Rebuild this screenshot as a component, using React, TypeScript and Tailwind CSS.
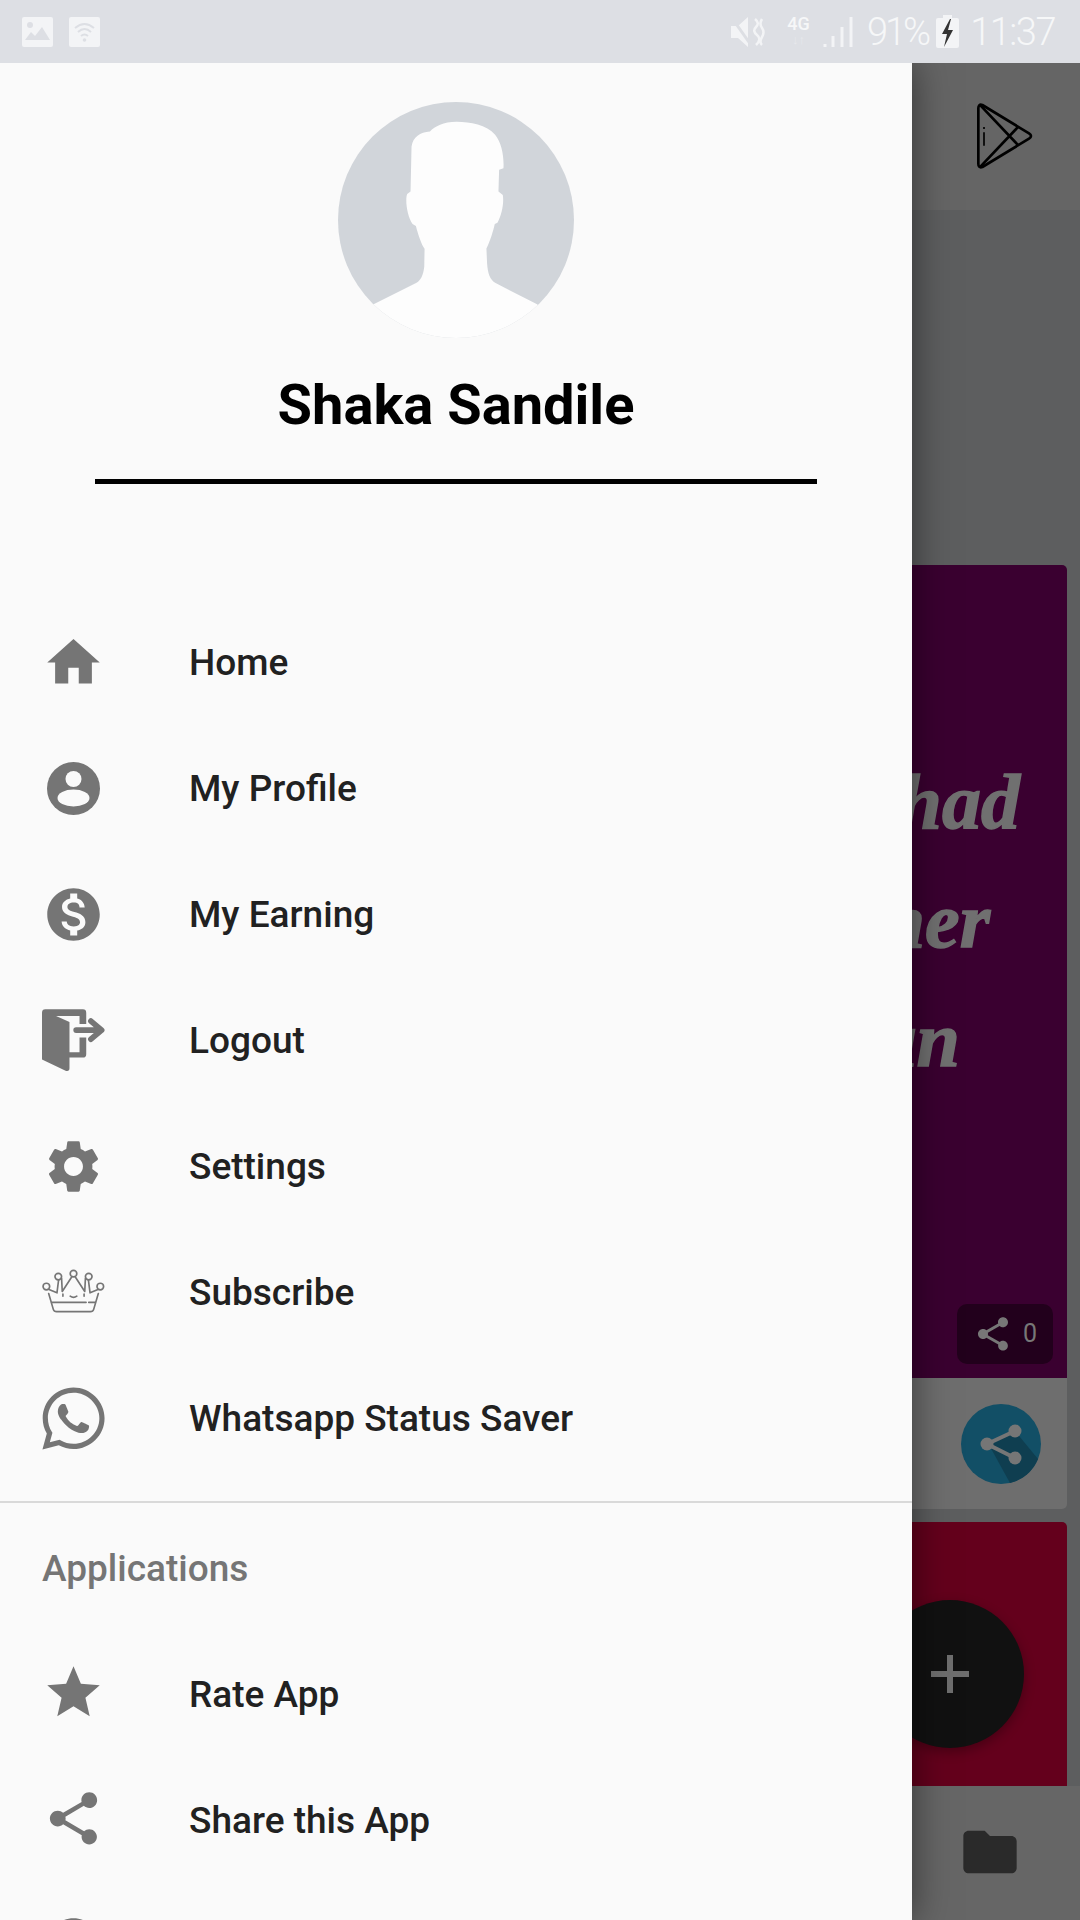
import { MdHome, MdMonetizationOn, MdSettings, MdStar, MdShare, MdFolder, MdHelp } from 'react-icons/md';
import { FaWhatsapp } from 'react-icons/fa';

const ROBOTO = 'font-["Roboto",sans-serif]';

const ProfileIcon = () => (
  <svg viewBox="0 0 53 53" className="w-[53px] h-[53px]">
    <circle cx="26.5" cy="26.5" r="26.5" fill="#757575" />
    <circle cx="26.5" cy="17" r="8" fill="#fafafa" />
    <ellipse cx="26.5" cy="36" rx="16" ry="8.5" fill="#fafafa" />
  </svg>
);

const LogoutIcon = () => (
  <svg viewBox="60 1155 200 200" className="w-[67px] h-[67px] shrink-0" fill="#757575">
    <path d="M66 1172q0-10 10-10h112q10 0 10 10v34h-20v-24h-70l40 18v90h30v-44h20v50q0 10-10 10h-40v32q0 10-10 8l-72-34v-140z" />
    <path d="M168 1224h74M212 1197l32 27-32 27" fill="none" stroke="#757575" strokeWidth="17" strokeLinecap="round" strokeLinejoin="round" />
  </svg>
);

const CrownIcon = () => (
  <svg viewBox="62 84 196 136" className="w-[65px] h-[45px] shrink-0 mb-[2px]" fill="none" stroke="#757575" strokeWidth="5" strokeLinecap="round" strokeLinejoin="round">
    <circle cx="78" cy="137" r="10" />
    <circle cx="114" cy="107" r="10" />
    <circle cx="160" cy="98" r="10" />
    <circle cx="206" cy="107" r="10" />
    <circle cx="241" cy="137" r="10" />
    <path d="M86 146l24 10 5-39M124 112l2 40 28-43M166 109l28 43 2-40M205 117l5 39 24-10" />
    <path d="M85 158l14 48q2 7 10 7h102q8 0 10-7l14-48" />
    <path d="M94 185h104M206 185h20" />
    <path d="M128 160v6M192 160v6M150 166q10 7 20 0" />
  </svg>
);

const PlayIcon = () => (
  <svg viewBox="225 120 180 210" className="w-[60px] h-[70px]" fill="none" stroke="#000" strokeWidth="8" strokeLinejoin="round">
    <path d="M247 132l140 85q12 8 0 16l-140 85q-12 4-12-10V142q0-14 12-10z" />
    <path d="M242 134l112 118M242 316l112-118" />
    <path d="M252 198v6M252 214v40" strokeWidth="5" />
  </svg>
);

const Avatar = () => (
  <svg viewBox="55 37 706 706" className="w-[236px] h-[236px] mx-auto">
    <defs>
      <clipPath id="avatar-clip">
        <circle cx="408" cy="390" r="353" />
      </clipPath>
    </defs>
    <circle cx="408" cy="390" r="353" fill="#d1d5da" />
    <path
      clipPath="url(#avatar-clip)"
      fill="#fdfdfd"
      d="M410 96C370 96 345 110 330 125C300 128 280 140 275 170L272 305L262 312C255 330 262 380 278 402L288 408C295 435 305 465 314 476L313 530C310 555 303 570 290 578L160 643L160 760L652 760L652 643L525 578C510 568 503 550 501 520L499 475C510 455 520 420 524 402L532 398C545 375 552 340 548 315L535 305L537 240L550 235C552 200 545 160 525 135C500 105 450 96 410 96Z"
    />
  </svg>
);

const Row = ({ icon, label, lower }: { icon: React.ReactNode; label?: string; lower?: boolean }) => (
  <div className="flex items-center h-[126px] shrink-0">
    <div className="w-[147px] flex justify-center items-center">{icon}</div>
    <div className="w-[42px]" />
    <span className={`${ROBOTO} text-[37px] font-medium text-[#212121] ${lower ? 'pt-[6px]' : 'pt-[2px]'}`}>{label}</span>
  </div>
);

const Drawer = () => (
  <aside className="relative z-10 w-[912px] shrink-0 bg-[#fafafa] shadow-[0_0_36px_rgba(0,0,0,0.5)] flex flex-col">
    <div className="pt-[39px] shrink-0">
      <Avatar />
      <h1 className={`${ROBOTO} text-[56px] leading-[66px] font-bold text-black text-center mt-[34px]`}>Shaka Sandile</h1>
      <div className="h-[5px] bg-black mx-[95px] mt-[41px]" />
    </div>
    <nav className="flex flex-col mt-[115px] shrink-0">
      <Row icon={<MdHome size={63} color="#757575" className="shrink-0" />} label="Home" />
      <Row icon={<ProfileIcon />} label="My Profile" />
      <Row icon={<MdMonetizationOn size={63} color="#757575" className="shrink-0" />} label="My Earning" />
      <Row icon={<LogoutIcon />} label="Logout" />
      <Row icon={<MdSettings size={63} color="#757575" className="shrink-0" />} label="Settings" />
      <Row icon={<CrownIcon />} label="Subscribe" />
      <Row icon={<FaWhatsapp size={71} color="#757575" className="shrink-0" />} label="Whatsapp Status Saver" />
    </nav>
    <div className="h-[2px] bg-[#d9d9d9] mt-[20px] shrink-0" />
    <div className={`${ROBOTO} h-[126px] pt-[6px] shrink-0 flex items-center pl-[42px] text-[37px] font-medium text-[#757575]`}>Applications</div>
    <Row lower icon={<MdStar size={63} color="#757575" className="shrink-0" />} label="Rate App" />
    <Row lower icon={<MdShare size={63} color="#757575" className="shrink-0" />} label="Share this App" />
    <Row icon={<MdHelp size={63} color="#757575" className="shrink-0" />} />
  </aside>
);

const Feed = () => (
  <main className="relative flex-1 min-w-0 overflow-hidden flex flex-col bg-[#5d5e5f]">
    <div className="h-[147px] shrink-0 bg-[#656565] flex items-center justify-end pr-[45px] pb-[2px]">
      <PlayIcon />
    </div>
    <div className="flex-1 pr-[13px] pt-[355px] flex flex-col">
      <div className="h-[813px] bg-[#3a0030] rounded-tr-[5px] flex flex-col justify-between overflow-hidden">
        <div className="mt-[177px] flex flex-col items-end font-['Liberation_Serif',serif] italic font-bold text-[78px] leading-[119px] text-[#707070] [-webkit-text-stroke:1.5px_#707070]">
          <span className="pr-[47px]">had</span>
          <span className="pr-[77px] whitespace-nowrap">other</span>
          <span className="pr-[107px] whitespace-nowrap">man</span>
        </div>
        <div className="self-end mr-[14px] mb-[14px] w-[96px] h-[60px] rounded-[10px] bg-[#22001c] flex items-center justify-center gap-[10px]">
          <MdShare size={40} color="#777777" />
          <span className={`${ROBOTO} text-[25px] text-[#777777]`}>0</span>
        </div>
      </div>
      <div className="h-[131px] bg-[#6e6e6e] rounded-br-[5px] flex items-start justify-end pr-[26px] pt-[26px]">
        <svg viewBox="0 0 80 80" className="w-[80px] h-[80px]">
          <circle cx="40" cy="40" r="40" fill="#124f66" />
          <path d="M27 39l27-12 23 28a40 40 0 0 1-28 24z" fill="#0f3e50" />
          <path d="M54 27L26 40l28 14" fill="none" stroke="#767676" strokeWidth="4" />
          <circle cx="54" cy="27" r="6.5" fill="#767676" />
          <circle cx="26" cy="40" r="6.5" fill="#767676" />
          <circle cx="54" cy="54" r="6.5" fill="#767676" />
        </svg>
      </div>
      <div className="h-[264px] mt-[13px] bg-[#64001c] rounded-tr-[5px]" />
    </div>
    <div className="h-[134px] shrink-0 bg-[#666666] flex items-center justify-end pr-[58px] pb-[2px]">
      <MdFolder size={64} color="#2a2a2a" />
    </div>
    {/* fab, drawer covers its left edge */}
    <div className="absolute left-[-36px] top-[1537px] w-[148px] h-[148px] rounded-full bg-[#111111] flex items-center justify-center shadow-[0_4px_12px_rgba(0,0,0,0.3)]">
      <svg viewBox="0 0 38 38" className="w-[38px] h-[38px]">
        <path d="M19 0v38M0 19h38" stroke="#6e6e6e" strokeWidth="6" />
      </svg>
    </div>
  </main>
);

const StatusBar = () => (
  <header className={`${ROBOTO} relative z-20 h-[63px] shrink-0 bg-[#dddfe4] flex items-center pl-[22px] pr-[25px] text-[#f6f7f8]`}>
    <svg viewBox="0 0 31 30" className="w-[31px] h-[30px]">
      <rect width="31" height="30" rx="2" fill="#f3f4f6" />
      <circle cx="8" cy="8" r="3" fill="#dddfe4" />
      <path d="M3 23l6-8 4 4 7-9 8 13z" fill="#dddfe4" />
    </svg>
    <svg viewBox="0 0 31 30" className="w-[31px] h-[30px] ml-[16px]">
      <rect width="31" height="30" rx="2" fill="#f3f4f6" />
      <path d="M6 11q9.500-8 19 0M9 15q6.500-6 13 0M12 19q3.500-3 7 0" fill="none" stroke="#dddfe4" strokeWidth="2" />
      <circle cx="15.500" cy="23" r="1.800" fill="#dddfe4" />
    </svg>
    <div className="flex-1" />
    <svg viewBox="0 0 34 32" className="w-[34px] h-[32px]">
      <path d="M0 10h7l10-9v30L7 22H0z" fill="#f3f4f6" />
      <path d="M1 2l19 27" stroke="#dddfe4" strokeWidth="3" />
      <path d="M24 3q5 4 1 8t1 8-1 10M31 3q-3 5 0 9t0 9 0 8" fill="none" stroke="#f3f4f6" strokeWidth="2.500" />
    </svg>
    <div className="ml-[20px] w-[27px] flex flex-col items-center text-[18px] leading-[16px] font-medium">
      <span>4G</span>
      <span className="opacity-40 text-[13px]">↓↑</span>
    </div>
    <svg viewBox="0 0 31 32" className="w-[31px] h-[32px] ml-[11px]">
      <path d="M2 31v-3M10 31v-11M19 31V11M28 31V1" stroke="#f3f4f6" strokeWidth="3" />
    </svg>
    <span className="ml-[13px] text-[38px] font-light tracking-[-3px] leading-none">91%</span>
    <svg viewBox="0 0 23 33" className="w-[23px] h-[33px] ml-[8px]">
      <path d="M7 0h9v3h5q2 0 2 2v26q0 2-2 2H2q-2 0-2-2V5q0-2 2-2h5z" fill="#f3f4f6" />
      <path d="M14 4L6 19h5l-3 13 9-17h-5l3-11z" fill="#333" />
    </svg>
    <span className="ml-[11px] text-[38px] font-light tracking-[-1.500px] leading-none">11:37</span>
  </header>
);

export default function App() {
  return (
    <div className="w-[1080px] h-[1920px] overflow-hidden flex flex-col bg-[#5d5e5f]">
      <StatusBar />
      <div className="flex flex-1 min-h-0">
        <Drawer />
        <Feed />
      </div>
    </div>
  );
}
